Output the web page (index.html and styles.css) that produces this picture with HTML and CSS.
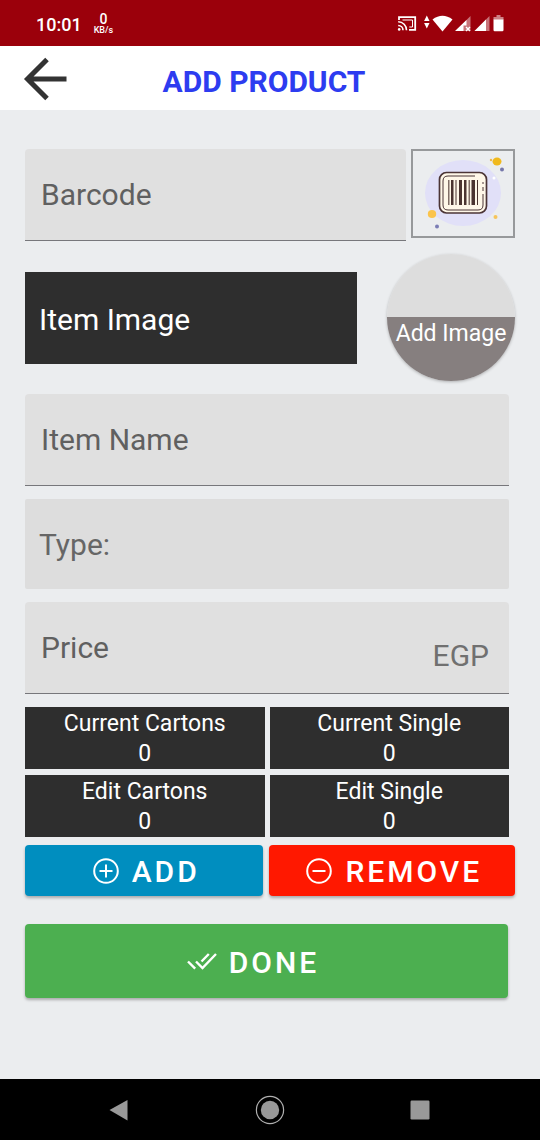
FILE: index.html
```html
<!DOCTYPE html>
<html lang="en">
<head>
<meta charset="utf-8">
<meta name="viewport" content="width=device-width, initial-scale=1">
<title>Add Product</title>
<link rel="stylesheet" href="styles.css">
</head>
<body>
<div class="statusbar">
  <div class="status-left">
    <span class="clock">10:01</span>
    <span class="rate"><span class="rate-value">0</span><span class="rate-unit">KB/s</span></span>
  </div>
  <svg class="status-icons" width="108" height="18" viewBox="0 0 108 18" fill="#fff" aria-hidden="true">
    <path d="M2 5V2.200h16.200v12.600H12" fill="none" stroke="#fff" stroke-width="1.800"/>
    <path d="M5.500 5h10v7h-3.200" fill="none" stroke="#fff" stroke-width="1"/>
    <path d="M1.200 6.800a8.300 8.300 0 0 1 8.300 8.500M1.200 10.500a4.800 4.800 0 0 1 4.800 4.800" fill="none" stroke="#fff" stroke-width="1.600"/>
    <circle cx="2.200" cy="14.400" r="1.300"/>
    <path d="M29.800 .5 32.500 6h-5.400zM29.800 13.500 32.500 8h-5.400z"/>
    <path d="M35.500 4.500Q45.500-3 55.500 4.500L45.500 16.500z"/>
    <path d="M73.500 1v15H58.500z" opacity=".45"/>
    <path d="M69.500 5v5.500h-3V16h-8.500z"/>
    <path d="m69 12 4 4m0-4-4 4" stroke="#fff" stroke-width="1.400"/>
    <path d="M92.500 1v15h-15z" opacity=".45"/>
    <path d="M89 4.500V16H77.500z"/>
    <path d="M99.500 0h4v2h3v3h-10V2h3z" opacity=".5"/>
    <path d="M96.500 4.500h10V15a1.200 1.200 0 0 1-1.200 1.200h-7.600A1.200 1.200 0 0 1 96.500 15z"/>
  </svg>
</div>

<header class="appbar">
  <button class="back" type="button" aria-label="Back">
    <svg width="44" height="44" viewBox="0 0 44 44" fill="none" stroke="#333" stroke-width="5" aria-hidden="true"><path d="M43.500 22H5M24 2.500 4.500 22 24 41.500"/></svg>
  </button>
  <h1 class="title">ADD PRODUCT</h1>
</header>

<main class="content">
  <form class="form">
    <div class="barcode-row">
      <input class="field" type="text" placeholder="Barcode" aria-label="Barcode">
      <button class="scan" type="button" aria-label="Scan barcode">
        <svg width="100" height="85" viewBox="0 0 100 85" aria-hidden="true">
          <ellipse cx="50" cy="42" rx="38" ry="33" fill="#e1e0f8"/>
          <ellipse cx="84" cy="10.500" rx="4.500" ry="4" fill="#f0b91d"/><circle cx="78" cy="9" r="1.200" fill="#f0b94a"/>
          <circle cx="89" cy="18.500" r="2" fill="#7577aa"/>
          <ellipse cx="19" cy="63" rx="4.200" ry="4" fill="#fbc44c"/><circle cx="24" cy="75.500" r="2" fill="#7b7db5"/>
          <circle cx="82.500" cy="66" r="2" fill="#f6c45a"/><circle cx="81" cy="27" r="1.500" fill="#fff"/>
          <rect x="26.500" y="21.500" width="47" height="40.500" rx="7" fill="#fff7e8" stroke="#4b3436" stroke-width="1.700"/>
          <path d="M62 25H35q-5 0-5 5v24q0 5 5 5h30q5 0 5-5V43M70 31v2m0 3v4" fill="none" stroke="#4b3436" stroke-width="1"/>
          <g fill="#4b3430"><path d="M38 29h2.500v25H38zM42.500 29h1v25h-1zM46 29h3v25h-3zM51 29h2.500v25H51zM58.500 29H62v25h-3.500zM64 29h1v25h-1z"/><path d="M35 29h1.500v25H35zM55.500 29H57v25h-1.500z" opacity=".7"/></g>
        </svg>
      </button>
    </div>

    <div class="image-row">
      <div class="image-label">Item Image</div>
      <button class="add-image" type="button"><span class="add-image-text">Add Image</span></button>
    </div>

    <input class="field" type="text" placeholder="Item Name" aria-label="Item name">
    <select class="type" aria-label="Type"><option>Type:</option></select>
    <label class="price">
      <input class="price-input" type="text" inputmode="decimal" placeholder="Price" aria-label="Price">
      <span class="currency">EGP</span>
    </label>

    <div class="tiles">
      <div class="tile"><span>Current Cartons</span><span>0</span></div>
      <div class="tile"><span>Current Single</span><span>0</span></div>
      <div class="tile"><span>Edit Cartons</span><span>0</span></div>
      <div class="tile"><span>Edit Single</span><span>0</span></div>
    </div>
  </form>

  <div class="actions">
    <button class="btn add" type="button">
      <svg width="26" height="26" viewBox="0 0 26 26" fill="none" stroke="#fff" stroke-width="2" aria-hidden="true"><circle cx="13" cy="13" r="11.800"/><path d="M6.500 13h13M13 6.500v13"/></svg>
      <span>ADD</span>
    </button>
    <button class="btn remove" type="button">
      <svg width="26" height="26" viewBox="0 0 26 26" fill="none" stroke="#fff" stroke-width="2" aria-hidden="true"><circle cx="13" cy="13" r="11.800"/><path d="M6.500 13h13"/></svg>
      <span>REMOVE</span>
    </button>
  </div>
  <button class="btn done" type="button">
    <svg width="30" height="18" viewBox="0 0 30 18" fill="none" stroke="#fff" stroke-width="2.400" aria-hidden="true"><path d="M1 9.500 8.200 16.700M9 9.500 15.500 16 29 2M14.500 9.500 21.800 2"/></svg>
    <span>DONE</span>
  </button>
</main>

<nav class="navbar" aria-label="System">
  <button class="nav-btn" type="button" aria-label="Back"><svg width="28" height="28" viewBox="0 0 28 28"><path d="M3.500 14 21.500 4v20.500z" fill="#999"/></svg></button>
  <button class="nav-btn" type="button" aria-label="Home"><svg width="30" height="30" viewBox="0 0 30 30"><circle cx="15" cy="15" r="13.600" fill="none" stroke="#b0b0b0" stroke-width="1.200"/><circle cx="15" cy="15" r="9.200" fill="#999"/></svg></button>
  <button class="nav-btn" type="button" aria-label="Recent apps"><svg width="20" height="20" viewBox="0 0 20 20"><rect x=".5" y=".5" width="19" height="19" rx="1.200" fill="#999"/></svg></button>
</nav>
</body>
</html>
```
FILE: styles.css
```css
* { box-sizing: border-box; }

body {
  margin: 0;
  min-height: 100vh;
  display: flex;
  flex-direction: column;
  background: #ebedef;
  font-family: Roboto, "Liberation Sans", sans-serif;
}

button, input, select { font: inherit; border: 0; margin: 0; }
button { padding: 0; cursor: pointer; }
svg { display: block; flex: none; }

.statusbar {
  height: 46px;
  padding: 0 35px 0 36px;
  display: flex;
  align-items: center;
  justify-content: space-between;
  background: #9b000b;
  color: #fff;
}
.status-left { display: flex; align-items: center; gap: 12px; padding-top: 2px; }
.status-icons { margin-top: 2px; }
.clock { font-size: 18px; font-weight: 500; }
.rate { display: flex; flex-direction: column; align-items: center; font-weight: 500; }
.rate-value { font-size: 14px; line-height: 11px; }
.rate-unit { font-size: 9px; line-height: 10px; }

.appbar {
  height: 64px;
  padding: 2px 23px 0;
  display: grid;
  grid-template-columns: 44px 1fr 44px;
  align-items: center;
  background: #fff;
}
.back { background: none; }
.title {
  margin: 0;
  padding: 6px 12px 0 0;
  text-align: center;
  font-size: 30px;
  line-height: 36px;
  font-weight: 700;
  color: #2d3cf0;
}

.content { flex: 1; padding: 39px 25px 0; }
.form { display: flex; flex-direction: column; gap: 13px; padding-right: 6px; }

.field, .price {
  width: 100%;
  height: 92px;
  padding: 0 16px;
  border-bottom: 1px solid #77777b;
  border-radius: 4px 4px 0 0;
  background: #e0e0e0;
  color: #222;
  font-size: 30px;
}
.field::placeholder, .price-input::placeholder { color: #606060; opacity: 1; }

.barcode-row { display: flex; align-items: flex-start; gap: 5px; margin-right: -6px; }
.barcode-row .field { flex: 1; min-width: 0; }
.scan {
  border: 2px solid #97999b;
  background: #ebedef;
}

.image-row { display: flex; align-items: center; gap: 30px; margin-right: -6px; }
.image-label {
  flex: 1;
  height: 92px;
  padding: 0 14px;
  background: #2e2e2e;
  color: #fff;
  font-size: 30px;
  line-height: 96px;
}
.add-image {
  width: 128px;
  height: 127px;
  border-radius: 50%;
  background: linear-gradient(#ddd 50%, #867f7f 50%);
  box-shadow: 0 1px 3px rgba(0, 0, 0, .25);
  color: #fff;
}
.add-image-text { display: block; padding-top: 32px; font-size: 23px; line-height: 28px; }

.type {
  appearance: none;
  width: 100%;
  height: 90px;
  padding: 0 14px;
  border-radius: 2px;
  background: #ddd;
  color: #666;
  font-size: 30px;
}
.price { display: flex; align-items: center; padding-right: 20px; }
.price-input { flex: 1; min-width: 0; padding: 0; background: none; }
.currency { padding-top: 16px; color: #707070; }

.tiles { display: grid; grid-template-columns: 1fr 1fr; gap: 6px 5px; }
.tile {
  display: flex;
  flex-direction: column;
  align-items: center;
  padding-top: 2px;
  background: #2e2e2e;
  color: #fff;
  font-size: 23px;
  line-height: 30px;
}

.actions { display: grid; grid-template-columns: 238fr 245fr; gap: 6px; margin: 8px 0 28px; }
.btn {
  display: flex;
  align-items: center;
  justify-content: center;
  gap: 13px;
  height: 51px;
  padding-left: 4px;
  border-radius: 4px;
  box-shadow: 0 2px 3px rgba(0, 0, 0, .28);
  color: #fff;
  font-size: 30px;
  font-weight: 500;
  letter-spacing: 3px;
}
.btn span { padding-top: 2px; }
.add { background: #008ebf; }
.remove { background: #ff1800; }
.done { width: calc(100% - 7px); height: 74px; padding: 0 27px 0 0; gap: 12px; background: #4caf50; }

.navbar {
  height: 61px;
  padding: 0 45px;
  display: grid;
  grid-template-columns: repeat(3, 1fr);
  align-items: center;
  justify-items: center;
  background: #000;
}
.nav-btn { background: none; }
```
